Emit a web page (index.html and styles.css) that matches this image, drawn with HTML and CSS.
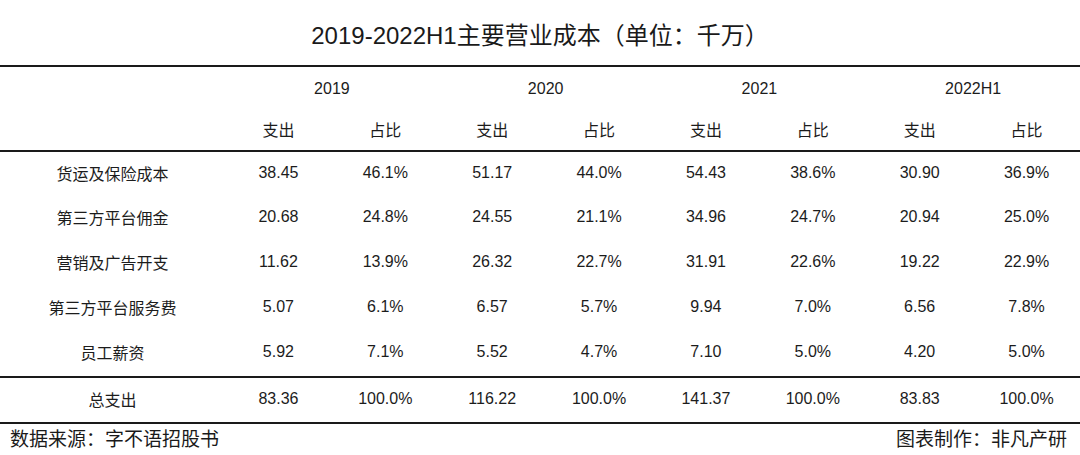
FILE: index.html
```html
<!DOCTYPE html>
<html lang="zh">
<head>
<meta charset="utf-8">
<link rel="stylesheet" href="styles.css">
</head>
<body>
<div class="page">
  <h1 class="title">2019-2022H1主要营业成本（单位：千万）</h1>
  <table class="cost">
    <colgroup>
      <col class="c-label">
      <col><col><col><col><col><col><col><col>
    </colgroup>
    <thead>
      <tr class="r-year">
        <th></th>
        <th colspan="2">2019</th>
        <th colspan="2">2020</th>
        <th colspan="2">2021</th>
        <th colspan="2">2022H1</th>
      </tr>
      <tr class="r-sub">
        <th></th>
        <th>支出</th><th>占比</th>
        <th>支出</th><th>占比</th>
        <th>支出</th><th>占比</th>
        <th>支出</th><th>占比</th>
      </tr>
    </thead>
    <tbody>
      <tr><td>货运及保险成本</td><td>38.45</td><td>46.1%</td><td>51.17</td><td>44.0%</td><td>54.43</td><td>38.6%</td><td>30.90</td><td>36.9%</td></tr>
      <tr><td>第三方平台佣金</td><td>20.68</td><td>24.8%</td><td>24.55</td><td>21.1%</td><td>34.96</td><td>24.7%</td><td>20.94</td><td>25.0%</td></tr>
      <tr><td>营销及广告开支</td><td>11.62</td><td>13.9%</td><td>26.32</td><td>22.7%</td><td>31.91</td><td>22.6%</td><td>19.22</td><td>22.9%</td></tr>
      <tr><td>第三方平台服务费</td><td>5.07</td><td>6.1%</td><td>6.57</td><td>5.7%</td><td>9.94</td><td>7.0%</td><td>6.56</td><td>7.8%</td></tr>
      <tr><td>员工薪资</td><td>5.92</td><td>7.1%</td><td>5.52</td><td>4.7%</td><td>7.10</td><td>5.0%</td><td>4.20</td><td>5.0%</td></tr>
    </tbody>
    <tfoot>
      <tr><td>总支出</td><td>83.36</td><td>100.0%</td><td>116.22</td><td>100.0%</td><td>141.37</td><td>100.0%</td><td>83.83</td><td>100.0%</td></tr>
    </tfoot>
  </table>
  <div class="footer">
    <span>数据来源：字不语招股书</span>
    <span>图表制作：非凡产研</span>
  </div>
</div>
</body>
</html>
```

FILE: styles.css
```css
html, body {
  margin: 0;
  padding: 0;
  background: #ffffff;
}

.page {
  width: 1080px;
  height: 455px;
  font-family: "Liberation Sans", "Noto Sans CJK SC", sans-serif;
  color: #1c1c1c;
  overflow: hidden;
}

.title {
  margin: 0;
  height: 65px;
  display: flex;
  align-items: center;
  justify-content: center;
  padding-top: 2px;
  box-sizing: border-box;
  font-size: 24px;
  font-weight: normal;
  color: #1a1a1a;
}

.cost {
  width: 1080px;
  border-collapse: collapse;
  table-layout: fixed;
  font-size: 16px;
}

.cost .c-label {
  width: 225px;
}

.cost th,
.cost td {
  padding: 0;
  text-align: center;
  font-weight: normal;
  white-space: nowrap;
}

.cost thead .r-year th {
  height: 43px;
  border-top: 2px solid #1a1a1a;
}

.cost thead .r-sub th {
  height: 38px;
  padding-bottom: 2px;
}

.cost tbody tr:first-child td {
  border-top: 2px solid #1a1a1a;
}

.cost tbody td {
  height: 42px;
  padding-bottom: 3px;
}

.cost tbody tr:first-child td {
  height: 41px;
}

.cost tfoot td {
  height: 42px;
  padding-bottom: 2px;
  border-top: 2px solid #1a1a1a;
  border-bottom: 2px solid #1a1a1a;
}

.footer {
  display: flex;
  justify-content: space-between;
  padding: 2px 13px 0 10px;
  font-size: 19px;
  line-height: 28px;
  color: #1a1a1a;
}
```
